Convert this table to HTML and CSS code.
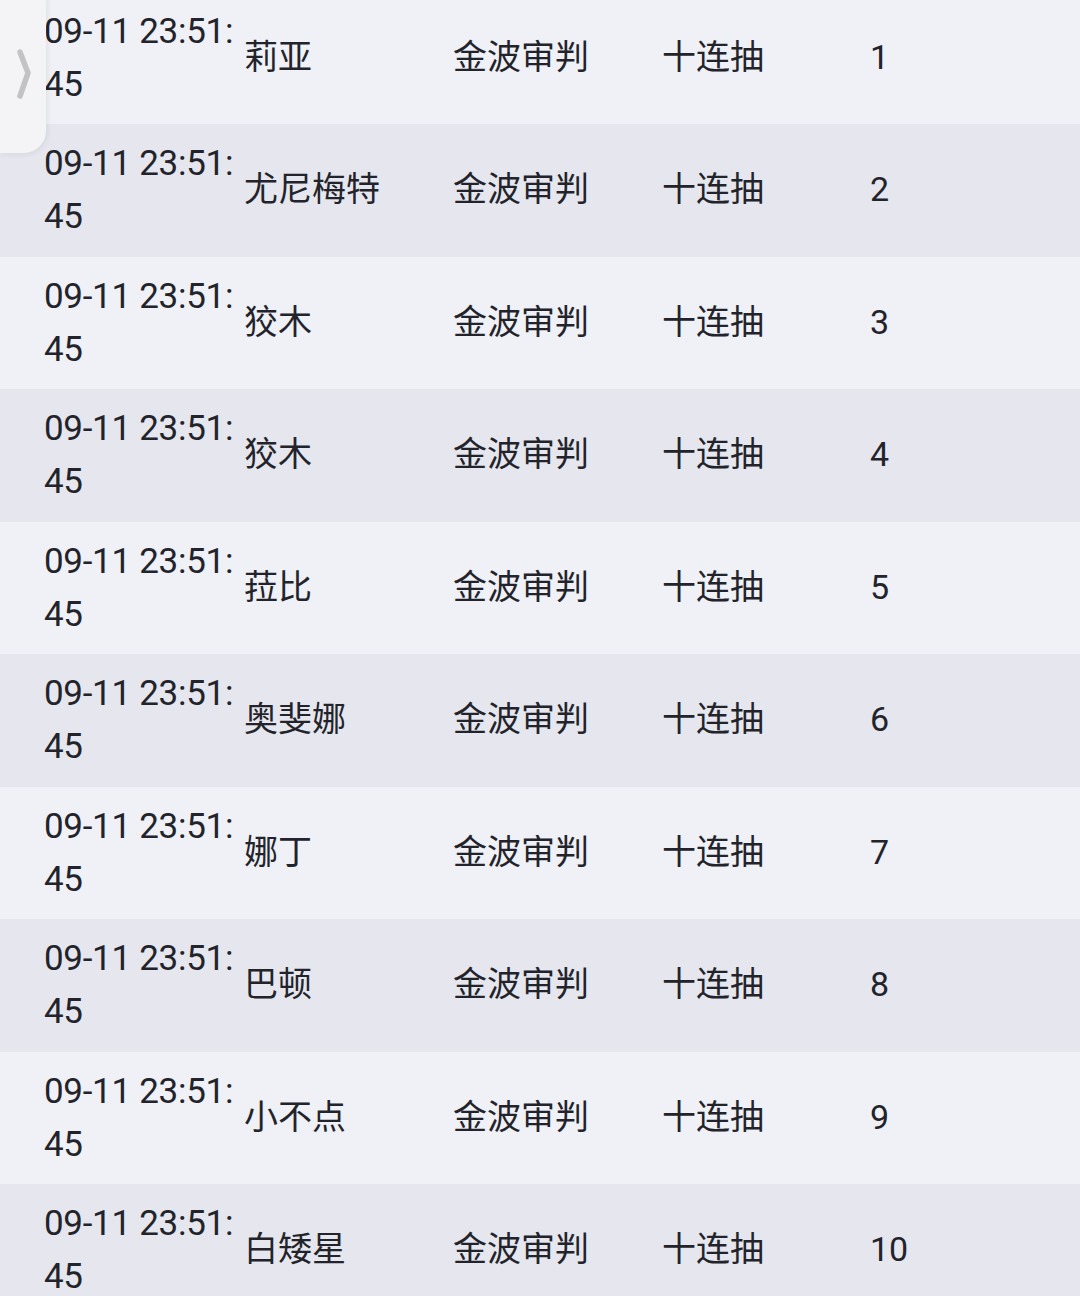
FILE: index.html
```html
<!DOCTYPE html>
<html lang="zh-CN">
<head>
<meta charset="utf-8">
<title>抽卡记录</title>
<link rel="stylesheet" href="styles.css">
</head>
<body>
<div class="list">
  <div class="row"><div class="time">09-11 23:51:45</div><div class="cell">莉亚</div><div class="cell">金波审判</div><div class="cell">十连抽</div><div class="cell num">1</div></div>
  <div class="row"><div class="time">09-11 23:51:45</div><div class="cell">尤尼梅特</div><div class="cell">金波审判</div><div class="cell">十连抽</div><div class="cell num">2</div></div>
  <div class="row"><div class="time">09-11 23:51:45</div><div class="cell">狡木</div><div class="cell">金波审判</div><div class="cell">十连抽</div><div class="cell num">3</div></div>
  <div class="row"><div class="time">09-11 23:51:45</div><div class="cell">狡木</div><div class="cell">金波审判</div><div class="cell">十连抽</div><div class="cell num">4</div></div>
  <div class="row"><div class="time">09-11 23:51:45</div><div class="cell">菈比</div><div class="cell">金波审判</div><div class="cell">十连抽</div><div class="cell num">5</div></div>
  <div class="row"><div class="time">09-11 23:51:45</div><div class="cell">奥斐娜</div><div class="cell">金波审判</div><div class="cell">十连抽</div><div class="cell num">6</div></div>
  <div class="row"><div class="time">09-11 23:51:45</div><div class="cell">娜丁</div><div class="cell">金波审判</div><div class="cell">十连抽</div><div class="cell num">7</div></div>
  <div class="row"><div class="time">09-11 23:51:45</div><div class="cell">巴顿</div><div class="cell">金波审判</div><div class="cell">十连抽</div><div class="cell num">8</div></div>
  <div class="row"><div class="time">09-11 23:51:45</div><div class="cell">小不点</div><div class="cell">金波审判</div><div class="cell">十连抽</div><div class="cell num">9</div></div>
  <div class="row"><div class="time">09-11 23:51:45</div><div class="cell">白矮星</div><div class="cell">金波审判</div><div class="cell">十连抽</div><div class="cell num">10</div></div>
</div>
<div class="side-tab">
  <svg class="chev" width="20" height="60" viewBox="0 0 20 60"><path d="M4 4 L12 25 L4 48" fill="none" stroke="#c3c3c5" stroke-width="5.5" stroke-linecap="round" stroke-linejoin="round"/></svg>
</div>
</body>
</html>
```
FILE: styles.css
```css
html, body {
  margin: 0;
  padding: 0;
  background: #f0f1f7;
  overflow: hidden;
}
body {
  width: 1080px;
  height: 1296px;
  position: relative;
  font-family: Roboto, "Noto Sans CJK SC", sans-serif;
  color: #23242b;
}
.list {
  margin-top: -8.5px;
}
.row {
  display: grid;
  grid-template-columns: 200px 209px 209px 208px 1fr;
  align-items: center;
  height: 132.5px;
  padding-left: 44px;
  background: #f0f1f7;
}
.row:nth-child(even) {
  background: #e6e7ee;
}
.time {
  font-size: 35px;
  letter-spacing: -0.3px;
  line-height: 53px;
  word-break: break-all;
  padding-right: 4px;
}
.cell {
  font-size: 34px;
  line-height: 40px;
  white-space: nowrap;
  padding-bottom: 2px;
}
.num {
  font-size: 34px;
}
.side-tab {
  position: absolute;
  left: 0;
  top: -20px;
  width: 46px;
  height: 173px;
  background: #f4f4f6;
  border-radius: 0 22px 22px 0;
  box-shadow: 1px 1px 6px rgba(0, 0, 0, 0.08);
}
.chev {
  position: absolute;
  left: 16px;
  top: 68px;
}
```
